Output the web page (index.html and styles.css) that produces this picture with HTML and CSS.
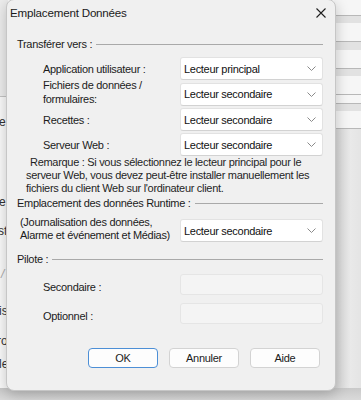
FILE: index.html
```html
<!DOCTYPE html>
<html lang="fr">
<head>
	<meta charset="UTF-8">
	<title>Emplacement Données</title>
	<link rel="stylesheet" href="styles.css">
</head>
<body>
	<div class="desk">
		<!-- fenêtre derrière, côté gauche -->
		<div class="back-left">
			<div class="bl-top"></div>
			<div class="frag f1">e</div>
			<div class="frag f2">e</div>
			<div class="frag f3">st</div>
			<div class="frag f4 dim">/</div>
			<div class="frag f5">is</div>
			<div class="frag f6">ro</div>
			<div class="frag f7">le</div>
		</div>

		<!-- fenêtre derrière, côté droit -->
		<div class="back-right">
			<div class="br-row h15"></div>
			<div class="br-line"></div>
			<div class="br-band h7"></div>
			<div class="br-row h18"></div>
			<div class="br-line"></div>
			<div class="br-band h8"></div>
			<div class="br-row h18"></div>
			<div class="br-line"></div>
			<div class="br-band h7"></div>
			<div class="br-row h18"></div>
			<div class="br-line"></div>
			<div class="br-row h8"></div>
			<div class="br-line"></div>
			<div class="br-band h7"></div>
			<div class="br-row h17"></div>
			<div class="br-line"></div>
			<div class="br-rest"></div>
		</div>
		<div class="back-bottom"></div>

		<div class="dialog">
			<div class="titlebar">
				<span class="title">Emplacement Données</span>
				<span class="close">
					<svg width="10" height="10" viewBox="0 0 10 10"><path d="M0.5 0.5 L9.5 9.5 M9.5 0.5 L0.5 9.5" stroke="#1f1f1f" stroke-width="1.1" fill="none"/></svg>
				</span>
			</div>

			<div class="content">
				<div class="group g1"><span>Transférer vers :</span><i></i></div>

				<div class="rows">
					<div class="row">
						<label>Application utilisateur :</label>
						<div class="combo">Lecteur principal<svg class="chev" width="9" height="5" viewBox="0 0 9 5"><path d="M0.5 0.5 L4.5 4.5 L8.5 0.5" stroke="#8a8a8a" fill="none"/></svg></div>
					</div>
					<div class="row">
						<label class="two">Fichiers de données /<br>formulaires:</label>
						<div class="combo">Lecteur secondaire<svg class="chev" width="9" height="5" viewBox="0 0 9 5"><path d="M0.5 0.5 L4.5 4.5 L8.5 0.5" stroke="#8a8a8a" fill="none"/></svg></div>
					</div>
					<div class="row">
						<label>Recettes :</label>
						<div class="combo">Lecteur secondaire<svg class="chev" width="9" height="5" viewBox="0 0 9 5"><path d="M0.5 0.5 L4.5 4.5 L8.5 0.5" stroke="#8a8a8a" fill="none"/></svg></div>
					</div>
					<div class="row">
						<label>Serveur Web :</label>
						<div class="combo">Lecteur secondaire<svg class="chev" width="9" height="5" viewBox="0 0 9 5"><path d="M0.5 0.5 L4.5 4.5 L8.5 0.5" stroke="#8a8a8a" fill="none"/></svg></div>
					</div>
				</div>

				<p class="note">Remarque : Si vous sélectionnez le lecteur principal pour le<br>serveur Web, vous devez peut-être installer manuellement les<br>fichiers du client Web sur l'ordinateur client.</p>

				<div class="group g2"><span>Emplacement des données Runtime :</span><i></i></div>

				<div class="row runtime">
					<label class="two">(Journalisation des données,<br>Alarme et événement et Médias)</label>
					<div class="combo">Lecteur secondaire<svg class="chev" width="9" height="5" viewBox="0 0 9 5"><path d="M0.5 0.5 L4.5 4.5 L8.5 0.5" stroke="#8a8a8a" fill="none"/></svg></div>
				</div>

				<div class="group g3"><span>Pilote :</span><i></i></div>

				<div class="row pilot first">
					<label>Secondaire :</label>
					<div class="field"></div>
				</div>
				<div class="row pilot">
					<label>Optionnel :</label>
					<div class="field"></div>
				</div>

				<div class="buttons">
					<button class="btn default">OK</button>
					<button class="btn">Annuler</button>
					<button class="btn">Aide</button>
				</div>
			</div>
		</div>
	</div>
</body>
</html>
```
FILE: styles.css
```css
*{ box-sizing:border-box; }
body{ margin:0; padding:0; font-family:"Liberation Sans", Arial, sans-serif; font-size:11px; color:#1b1b1b; background:#d9d9d9; }
.desk{ position:relative; width:361px; height:400px; overflow:hidden; background:#fafafa; }

/* fenêtres derrière le dialogue */
.back-left{ width:8px; height:400px; background:#fafafa; overflow:hidden; }
.bl-top{ height:97px; background:#ededed; border-bottom:1px solid #c4c4c4; }
.frag{ height:12px; line-height:12px; font-size:12px; color:#333; white-space:nowrap; margin-left:-1px; }
.frag.dim{ color:#aaa; font-style:italic; }
.f1{ margin-top:19px; }
.f2{ margin-top:68px; }
.f3{ margin-top:17px; margin-left:-2px; }
.f4{ margin-top:31px; margin-left:1px; }
.f5{ margin-top:25px; margin-left:-1px; }
.f6{ margin-top:18px; margin-left:-3px; }
.f7{ margin-top:11px; margin-left:-1px; }

.back-right{ position:absolute; left:334px; top:0; width:27px; height:400px; background:#f5f5f5; }
.br-row{ background:#f6f6f6; }
.br-line{ height:1px; background:#b8b8b8; }
.br-band{ background:#e2e2e2; }
.h7{ height:7px; } .h8{ height:8px; } .h15{ height:15px; } .h17{ height:17px; } .h18{ height:18px; }
.br-rest{ height:268px; background:linear-gradient(to right, #d4d4d4, #e9e9e9 60%, #e4e4e4); }
.back-bottom{ position:absolute; left:0; top:388px; width:361px; height:12px; background:linear-gradient(#c9c9c9, #dadada); }

/* dialogue */
.dialog{ position:absolute; left:6px; top:-1px; width:330px; height:392px; background:#f0f0f0; border:1px solid #c6c6c6; border-radius:8px; box-shadow:0 4px 14px rgba(0,0,0,0.22); z-index:2; }
.titlebar{ height:24px; display:flex; align-items:center; padding-left:3px; }
.title{ font-size:11.6px; color:#1a1a1a; letter-spacing:-0.2px; }
.close{ margin-left:auto; margin-right:9px; width:10px; height:10px; display:flex; margin-top:1px; }

.content{ padding:0 12px 0 10px; }
.group{ display:flex; align-items:center; height:14px; margin-top:13px; letter-spacing:-0.3px; }
.group i{ flex:1; height:1px; background:#a9a9a9; margin-left:4px; margin-top:1px; }
.g2{ margin-top:1px; }
.g3{ margin-top:10px; }

.rows{ display:flex; flex-direction:column; gap:2px; margin-top:6px; }
.row{ display:flex; align-items:center; padding-left:26px; }
.row label{ letter-spacing:-0.3px; color:#1b1b1b; }
.row label.two{ line-height:14px; margin-top:-4px; }
.combo{ margin-left:auto; width:143px; height:23px; background:#fff; border:1px solid #e2e2e2; border-bottom-color:#d2d2d2; border-radius:3px; display:flex; align-items:center; padding-left:3px; letter-spacing:-0.3px; color:#111; }
.chev{ margin-left:auto; margin-right:6px; }

.note{ margin:0; padding-left:9px; text-indent:4px; line-height:13px; letter-spacing:-0.3px; color:#1f1f1f; }

.runtime{ padding-left:3px; margin-top:9px; }
.runtime label.two{ line-height:13px; margin-top:-3px; }

.pilot{ margin-top:8px; }
.pilot label{ margin-top:5px; }
.field{ margin-left:auto; width:143px; height:21px; background:#f4f4f4; border:1px solid #e5e5e5; border-radius:3px; }
.pilot + .pilot{ margin-top:8px; }

.buttons{ display:flex; justify-content:flex-end; gap:11px; margin-top:24px; padding-right:3px; }
.btn{ width:70px; height:20px; font-family:"Liberation Sans", Arial, sans-serif; font-size:11px; letter-spacing:-0.3px; color:#1b1b1b; background:#fdfdfd; border:1px solid #d3d3d3; border-radius:4px; padding:0; }
.btn.default{ border-color:#4d8fd6; }
```
